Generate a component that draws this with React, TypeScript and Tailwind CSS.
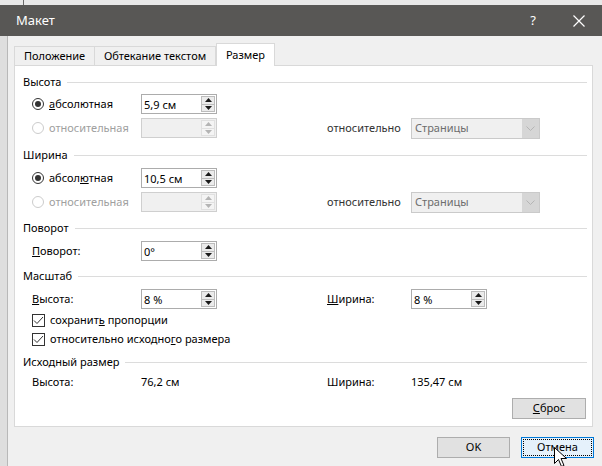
import React from 'react';

const font = "font-['Noto_Sans','Liberation_Sans',sans-serif]";

function Arrow({ up, disabled }: { up?: boolean; disabled?: boolean }) {
  return (
    <svg width="7" height="4" viewBox="0 0 7 4">
      <path
        d={up ? 'M0 4 L3.5 0 L7 4 Z' : 'M0 0 L3.5 4 L7 0 Z'}
        fill={disabled ? '#b4b4b4' : '#1a1a1a'}
      />
    </svg>
  );
}

function Spin({ value, disabled }: { value?: string; disabled?: boolean }) {
  return (
    <div
      className={`flex h-[20px] w-[76px] items-center border ${
        disabled ? 'border-[#cfcfcf] bg-[#f0f0f0]' : 'border-[#acacac] bg-white'
      }`}
    >
      <span className="flex-1 pl-[2px] text-[11px] leading-none text-black">{value}</span>
      <div
        className={`mr-px flex h-[16px] w-[14px] flex-col border ${
          disabled ? 'border-[#e0e0e0]' : 'border-[#bcbcbc]'
        }`}
      >
        <div
          className={`flex flex-1 items-center justify-center border-b ${
            disabled ? 'border-[#e0e0e0] bg-[#f4f4f4]' : 'border-[#bcbcbc] bg-[#ebebeb]'
          }`}
        >
          <Arrow up disabled={disabled} />
        </div>
        <div
          className={`flex flex-1 items-center justify-center ${
            disabled ? 'bg-[#f4f4f4]' : 'bg-[#ebebeb]'
          }`}
        >
          <Arrow disabled={disabled} />
        </div>
      </div>
    </div>
  );
}

function Select() {
  return (
    <div className="flex h-[21px] w-[129px] items-center border border-[#cacaca] bg-[#f0f0f0]">
      <span className="flex-1 pl-[3px] text-[11px] text-[#6d6d6d]">Страницы</span>
      <div className="flex h-full w-[17px] items-center justify-center bg-[#d6d6d6]">
        <svg width="9" height="5" viewBox="0 0 9 5">
          <path d="M0.5 0.5 L4.5 4.5 L8.5 0.5" fill="none" stroke="#b5b5b5" strokeWidth="1" />
        </svg>
      </div>
    </div>
  );
}

function Header({ title, mt }: { title: string; mt: string }) {
  return (
    <div className={`ml-[8px] mr-[5px] flex h-[16px] items-center gap-[6px] ${mt}`}>
      <span className="text-[11px] text-black">{title}</span>
      <div className="h-px flex-1 bg-[#dcdcdc]" />
    </div>
  );
}

function Radio({ checked, disabled }: { checked?: boolean; disabled?: boolean }) {
  return (
    <div
      className={`flex h-[12px] w-[12px] items-center justify-center rounded-full border bg-white ${
        disabled ? 'border-[#cccccc]' : 'border-[#333333]'
      }`}
    >
      {checked && <div className="h-[6px] w-[6px] rounded-full bg-[#333333]" />}
    </div>
  );
}

function Check({ children }: { children: React.ReactNode }) {
  return (
    <div className="flex h-[19px] items-center gap-[5px] pl-[17px]">
      <div className="flex h-[13px] w-[13px] items-center justify-center border border-[#333333] bg-white">
        <svg width="11" height="9" viewBox="0 0 11 9">
          <path d="M1 4.5 L4 7.5 L10 1" fill="none" stroke="#333333" strokeWidth="1" />
        </svg>
      </div>
      <span className="text-[11px] text-black">{children}</span>
    </div>
  );
}

function SizeRows({ abs, hot, mt }: { abs: string; hot: number; mt: string }) {
  const word = 'абсолютная';
  return (
    <>
      <div className={`flex h-[24px] items-center pl-[17px] ${mt}`}>
        <div className="flex w-[109px] items-center gap-[5px]">
          <Radio checked />
          <span className="text-[11px] text-black">
            {word.slice(0, hot)}
            <span className="underline">{word[hot]}</span>
            {word.slice(hot + 1)}
          </span>
        </div>
        <Spin value={abs} />
      </div>
      <div className="flex h-[24px] items-center pl-[17px]">
        <div className="flex w-[109px] items-center gap-[5px]">
          <Radio disabled />
          <span className="text-[11px] text-[#a0a0a0]">относительная</span>
        </div>
        <Spin disabled />
        <div className="w-[110px]" />
        <span className="w-[84px] text-[11px] text-[#333333]">относительно</span>
        <Select />
      </div>
    </>
  );
}

export default function App() {
  return (
    <div className={`relative flex h-[466px] w-[602px] flex-col overflow-hidden bg-[#f0f0f0] ${font}`}>
      {/* window behind */}
      <div className="flex h-[5px] bg-[#e8e8e8]">
        <div className="w-[23px]" />
        <div className="w-px bg-[#6a6a6a]" />
      </div>

      {/* title bar */}
      <div className="flex h-[31px] items-center bg-[#585755] pl-[16px] text-white">
        <span className="flex-1 text-[13px]">Макет</span>
        <span className="w-[46px] text-center text-[13px]">?</span>
        <div className="flex w-[46px] justify-center">
          <svg width="12" height="12" viewBox="0 0 12 12">
            <path d="M0.5 0.5 L11.5 11.5 M11.5 0.5 L0.5 11.5" stroke="#ffffff" strokeWidth="1.2" />
          </svg>
        </div>
      </div>

      <div className="flex flex-1">
        <div className="w-[8px] border-r border-[#b8b8b8] bg-[#dedede]" />
        <div className="flex flex-1 flex-col pl-[6px] pt-[7px]">
          {/* tabs */}
          <div className="flex h-[22px] items-end">
            <div className="flex h-[19px] w-[81px] items-center justify-center border border-b-0 border-[#d9d9d9] text-[11px] text-black">
              Положение
            </div>
            <div className="flex h-[19px] w-[121px] items-center justify-center border border-b-0 border-l-0 border-[#d9d9d9] text-[11px] text-black">
              Обтекание текстом
            </div>
            <div className="relative z-10 -mb-px flex h-[23px] w-[59px] items-center justify-center border border-b-0 border-[#d9d9d9] bg-white text-[11px] text-black">
              Размер
            </div>
          </div>

          {/* panel */}
          <div className="flex h-[362px] w-[579px] flex-col border border-[#d9d9d9] bg-white pt-[8px]">
            <Header title="Высота" mt="" />
            <SizeRows abs="5,9 см" hot={0} mt="mt-[2px]" />

            <Header title="Ширина" mt="mt-[7px]" />
            <SizeRows abs="10,5 см" hot={5} mt="mt-[3px]" />

            <Header title="Поворот" mt="mt-[6px]" />
            <div className="mt-[3px] flex h-[24px] items-center pl-[17px]">
              <span className="w-[109px] text-[11px] text-black">
                <span className="underline">П</span>оворот:
              </span>
              <Spin value="0°" />
            </div>

            <Header title="Масштаб" mt="mt-[5px]" />
            <div className="mt-[3px] flex h-[24px] items-center pl-[17px]">
              <span className="w-[109px] text-[11px] text-black">
                <span className="underline">В</span>ысота:
              </span>
              <Spin value="8 %" />
              <div className="w-[110px]" />
              <span className="w-[84px] text-[11px] text-black">
                <span className="underline">Ш</span>ирина:
              </span>
              <Spin value="8 %" />
            </div>
            <Check>
              сохранит<span className="underline">ь</span> пропорции
            </Check>
            <Check>
              относительно исходно<span className="underline">г</span>о размера
            </Check>

            <Header title="Исходный размер" mt="mt-[5px]" />
            <div className="mt-[2px] flex h-[20px] items-center pl-[17px] text-[11px] text-black">
              <span className="w-[109px]">Высота:</span>
              <span className="w-[76px]">76,2 см</span>
              <div className="w-[110px]" />
              <span className="w-[84px]">Ширина:</span>
              <span>135,47 см</span>
            </div>

            <div className="mt-[6px] flex justify-end pr-[6px]">
              <div className="flex h-[21px] w-[74px] items-center justify-center border border-[#adadad] bg-[#e1e1e1] text-[11px] text-black">
                <span className="underline">С</span>брос
              </div>
            </div>
          </div>

          {/* dialog buttons */}
          <div className="mt-[10px] flex justify-end gap-[11px] pr-[8px]">
            <div className="flex h-[21px] w-[73px] items-center justify-center border border-[#adadad] bg-[#e1e1e1] text-[11px] text-black">
              OK
            </div>
            <div className="flex h-[21px] w-[73px] items-center justify-center border border-[#0078d7] bg-[#e5f1fb] p-[1px]">
              <div className="flex h-full w-full items-center justify-center border border-dotted border-black text-[11px] text-black">
                Отмена
              </div>
            </div>
          </div>
        </div>
      </div>

      {/* mouse pointer */}
      <svg className="absolute left-[554px] top-[447px]" width="13" height="20" viewBox="0 0 13 20">
        <path
          d="M0.5 0.5 L0.5 16.5 L4.5 12.5 L7.5 19.5 L10 18.5 L7 11.5 L12.5 11.5 Z"
          fill="#ffffff"
          stroke="#000000"
          strokeWidth="1"
          strokeLinejoin="round"
        />
      </svg>
    </div>
  );
}
